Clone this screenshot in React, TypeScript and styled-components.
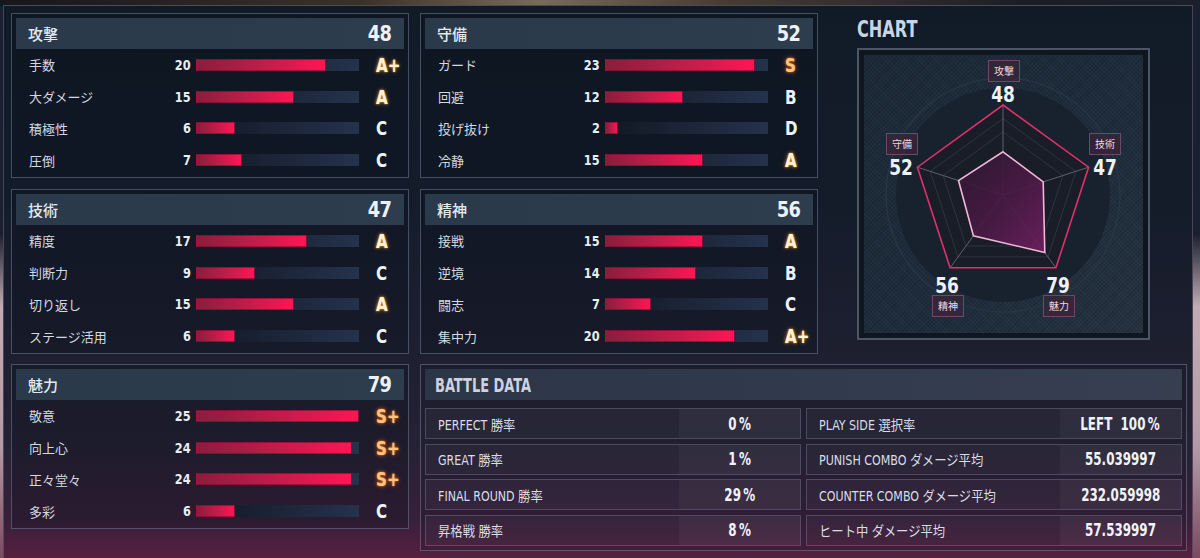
import React from 'react';
import styled, { createGlobalStyle, css } from 'styled-components';

const NUM_FONT = `"Liberation Sans Narrow", "DejaVu Sans Condensed", Roboto, "Noto Sans CJK JP", sans-serif`;
const JP_FONT = `"Noto Sans CJK JP", "Noto Sans", sans-serif`;
const LABEL_FONT = `"Liberation Sans Narrow", "DejaVu Sans Condensed", "Noto Sans CJK JP", sans-serif`;

const GlobalStyle = createGlobalStyle`
  html, body {
    margin: 0;
    height: 100%;
  }
  body {
    background:
      linear-gradient(90deg, #16161c 0%, #3c3129 30%, #7a6a58 45%, #4a3c34 60%, #1c1e26 85%, #1a1f2a 100%) top / 100% 6px no-repeat,
      linear-gradient(180deg, #1b2030 0%, #1b2030 42%, #c2acb4 55%, #b49aa6 80%, #7a4a60 100%);
    font-family: ${JP_FONT};
    overflow: hidden;
  }
  #root {
    height: 100%;
  }
`;

const Screen = styled.div`
  box-sizing: border-box;
  margin: 5px 7px 0 3px;
  height: calc(100% - 5px);
  border-top: 1px solid #7c3550;
  border-left: 1px solid rgba(120, 110, 130, 0.5);
  border-right: 1px solid rgba(120, 110, 130, 0.5);
  padding: 7px 5px 0 7px;
  background: linear-gradient(
    180deg,
    #111a27 0%,
    #141c2a 35%,
    #1d1f2f 62%,
    #252234 80%,
    #37203a 93%,
    #571f40 100%
  );
`;

const Layout = styled.div`
  display: grid;
  grid-template-columns: 398px 398px 1fr;
  grid-template-rows: 165px 164px auto;
  column-gap: 11px;
  row-gap: 11px;
  align-items: start;
`;

// condensed look: the installed narrow face is still wider than the game font
const Narrow = styled.span<{ $sx?: number; $origin?: string }>`
  display: inline-block;
  transform: scaleX(${(p) => p.$sx ?? 0.8});
  transform-origin: ${(p) => p.$origin ?? 'left'} center;
`;

const Panel = styled.section`
  box-sizing: border-box;
  height: 165px;
  border: 1px solid rgba(110, 128, 150, 0.55);
  background: rgba(6, 10, 18, 0.22);
  padding: 4px 4px 1px 4px;
  display: flex;
  flex-direction: column;
`;

const PanelHeader = styled.header`
  height: 31px;
  flex: none;
  display: flex;
  align-items: center;
  justify-content: space-between;
  padding: 0 12px;
  background: linear-gradient(90deg, #2b3a4a 0%, #2e3d4e 100%);
`;

const HeaderTitle = styled.span`
  font-family: ${JP_FONT};
  font-size: 15px;
  font-weight: 500;
  color: #e4e9ef;
`;

const HeaderValue = styled.span`
  font-family: ${NUM_FONT};
  font-size: 22px;
  font-weight: 700;
  color: #eef2f6;
  letter-spacing: -0.5px;
`;

const StatRow = styled.div`
  flex: 1;
  display: grid;
  grid-template-columns: 127px 30px 163px 29px;
  column-gap: 5px;
  align-items: center;
  padding-left: 13px;
  & > :last-child {
    margin-left: 12px;
  }
`;

const StatLabel = styled.span`
  font-family: ${JP_FONT};
  font-size: 13px;
  color: #d3d9e1;
`;

const StatNum = styled.span`
  font-family: ${NUM_FONT};
  font-size: 14px;
  font-weight: 700;
  color: #e8edf2;
  text-align: right;
`;

const Track = styled.div`
  height: 12px;
  background: linear-gradient(90deg, #121823 0%, #1b2435 45%, #24324c 100%);
`;

const Fill = styled.div`
  height: 100%;
  box-sizing: border-box;
  border: 1px solid rgba(120, 10, 40, 0.6);
  background: linear-gradient(90deg, #8b1d3d 0%, #c51c4b 55%, #ff1554 100%);
`;

const Grade = styled.span<{ $tier: string }>`
  font-family: ${NUM_FONT};
  font-size: 20px;
  font-weight: 700;
  color: #eef2f6;
  white-space: nowrap;
  display: inline-block;
  transform: scaleX(0.84);
  transform-origin: left center;
  ${(p) =>
    p.$tier === 'A' &&
    css`
      color: #fff3d6;
      text-shadow: 0 0 2px #ffb040, 0 0 5px rgba(255, 140, 30, 0.75);
    `}
  ${(p) =>
    p.$tier === 'S' &&
    css`
      color: #fbc57c;
      text-shadow: 0 0 2px #ff8a2a, 0 0 6px rgba(255, 90, 20, 0.8);
    `}
`;

const ChartArea = styled.div`
  grid-column: 3;
  grid-row: 1 / span 2;
  padding-left: 28px;
  padding-top: 6px;
`;

const ChartTitle = styled.h2`
  margin: 0 0 8px;
  height: 21px;
  line-height: 21px;
  font-family: ${NUM_FONT};
  font-size: 23px;
  font-weight: 700;
  color: #c9d5e2;
`;

const ChartFrame = styled.div`
  box-sizing: border-box;
  width: 293px;
  height: 292px;
  border: 2px solid #4c5667;
  padding: 5px;
  background: #0f161f;
`;

const ChartCanvas = styled.div`
  width: 279px;
  height: 278px;
  background:
    repeating-linear-gradient(45deg, rgba(255, 255, 255, 0.025) 0 1px, transparent 1px 3px),
    repeating-linear-gradient(-45deg, rgba(0, 0, 0, 0.12) 0 1px, transparent 1px 3px),
    linear-gradient(135deg, #1c2937 0%, #1f2c3b 60%, #25323f 100%);
`;

const BattlePanel = styled.section`
  grid-column: 2 / span 2;
  grid-row: 3;
  box-sizing: border-box;
  border: 1px solid rgba(130, 135, 160, 0.5);
  background: rgba(20, 20, 36, 0.2);
  padding: 4px;
`;

const BattleHeader = styled.header`
  height: 31px;
  display: flex;
  align-items: center;
  padding: 0 10px;
  margin-bottom: 8px;
  background: linear-gradient(90deg, #2b3647 0%, #333b4e 60%, #363e50 100%);
  font-family: ${NUM_FONT};
  font-size: 19px;
  font-weight: 700;
  color: #ccd3de;
`;

const BattleGrid = styled.div`
  display: grid;
  grid-template-columns: 1fr 1fr;
  column-gap: 5px;
  row-gap: 4.5px;
`;

const DataRow = styled.div`
  box-sizing: border-box;
  height: 31px;
  display: grid;
  grid-template-columns: 1fr 121px;
  border: 1px solid rgba(150, 155, 180, 0.32);
  background: rgba(255, 255, 255, 0.035);
`;

const DataLabel = styled.span`
  display: flex;
  align-items: center;
  padding-left: 12px;
  font-family: ${LABEL_FONT};
  font-size: 14px;
  color: #d9dde6;
  white-space: nowrap;
`;

const DataValue = styled.span`
  display: flex;
  align-items: center;
  justify-content: center;
  background: rgba(255, 255, 255, 0.04);
  font-family: ${NUM_FONT};
  font-size: 17px;
  font-weight: 700;
  color: #f0f3f7;
  white-space: pre;
`;

type Stat = [string, number, string];
type StatPanelData = { title: string; total: number; rows: Stat[]; col: number; row: number };

const panels: StatPanelData[] = [
  { title: '攻撃', total: 48, col: 1, row: 1, rows: [['手数', 20, 'A+'], ['大ダメージ', 15, 'A'], ['積極性', 6, 'C'], ['圧倒', 7, 'C']] },
  { title: '守備', total: 52, col: 2, row: 1, rows: [['ガード', 23, 'S'], ['回避', 12, 'B'], ['投げ抜け', 2, 'D'], ['冷静', 15, 'A']] },
  { title: '技術', total: 47, col: 1, row: 2, rows: [['精度', 17, 'A'], ['判断力', 9, 'C'], ['切り返し', 15, 'A'], ['ステージ活用', 6, 'C']] },
  { title: '精神', total: 56, col: 2, row: 2, rows: [['接戦', 15, 'A'], ['逆境', 14, 'B'], ['闘志', 7, 'C'], ['集中力', 20, 'A+']] },
  { title: '魅力', total: 79, col: 1, row: 3, rows: [['敬意', 25, 'S+'], ['向上心', 24, 'S+'], ['正々堂々', 24, 'S+'], ['多彩', 6, 'C']] },
];

const battleRows: [string, string][] = [
  ['PERFECT 勝率', '0\u2009%'],
  ['PLAY SIDE 選択率', 'LEFT  100\u2009%'],
  ['GREAT 勝率', '1\u2009%'],
  ['PUNISH COMBO ダメージ平均', '55.039997'],
  ['FINAL ROUND 勝率', '29\u2009%'],
  ['COUNTER COMBO ダメージ平均', '232.059998'],
  ['昇格戦 勝率', '8\u2009%'],
  ['ヒート中 ダメージ平均', '57.539997'],
];

const MAX_STAT = 25;

const StatPanel: React.FC<{ data: StatPanelData }> = ({ data }) => (
  <Panel style={{ gridColumn: data.col, gridRow: data.row }}>
    <PanelHeader>
      <HeaderTitle>{data.title}</HeaderTitle>
      <HeaderValue>
        <Narrow $sx={0.9} $origin="right">{data.total}</Narrow>
      </HeaderValue>
    </PanelHeader>
    {data.rows.map(([label, value, grade]) => (
      <StatRow key={label}>
        <StatLabel>{label}</StatLabel>
        <StatNum>
          <Narrow $sx={0.9} $origin="right">{value}</Narrow>
        </StatNum>
        <Track>
          <Fill style={{ width: `${(value / MAX_STAT) * 100}%` }} />
        </Track>
        <Grade $tier={grade[0]}>{grade}</Grade>
      </StatRow>
    ))}
  </Panel>
);

// radar: order clockwise from top
const radar = [
  { name: '攻撃', value: 48, box: [124, 5], num: [139, 47] },
  { name: '技術', value: 47, box: [225, 78], num: [241, 120] },
  { name: '魅力', value: 79, box: [179, 240], num: [194, 238] },
  { name: '精神', value: 56, box: [68, 240], num: [83, 238] },
  { name: '守備', value: 52, box: [22, 78], num: [37, 120] },
];

const CX = 139;
const CY = 140;
const R = 90;

const xy = (i: number, f: number) => {
  const a = ((-90 + 72 * i) * Math.PI) / 180;
  return [CX + R * f * Math.cos(a), CY + R * f * Math.sin(a)];
};
const pt = (i: number, f: number) => xy(i, f).map((n) => n.toFixed(1)).join(',');
const ring = (f: number) => radar.map((_, i) => pt(i, f)).join(' ');

const RadarChart: React.FC = () => (
  <svg width="279" height="278" viewBox="0 0 279 278">
    <defs>
      <linearGradient id="dataFill" x1="0" y1="0" x2="1" y2="1">
        <stop offset="0" stopColor="#2e1732" />
        <stop offset="0.55" stopColor="#4a1a45" />
        <stop offset="1" stopColor="#6e1f5e" />
      </linearGradient>
    </defs>
    <circle cx={CX} cy={CY} r={117} fill="none" stroke="#2b3745" strokeWidth="1.2" />
    <circle cx={CX} cy={CY} r={107} fill="#18222e" />
    <polygon points={ring(1)} fill="#181d28" />
    <polygon points={ring(0.85)} fill="none" stroke="rgba(120,130,150,0.22)" />
    <polygon points={ring(0.7)} fill="none" stroke="rgba(120,130,150,0.22)" />
    {radar.map((_, i) => {
      const [x2, y2] = xy(i, 1);
      return <line key={i} x1={CX} y1={CY} x2={x2} y2={y2} stroke="#5a6272" strokeWidth="1" />;
    })}
    <polygon points={ring(1)} fill="none" stroke="#e0306a" strokeWidth="1.6" />
    <polygon
      points={radar.map((d, i) => pt(i, d.value / 100)).join(' ')}
      fill="url(#dataFill)"
      fillOpacity="0.92"
      stroke="#efb6d6"
      strokeWidth="1.6"
    />
    {radar.map((d) => (
      <g key={d.name}>
        <rect
          x={d.box[0] + 0.5}
          y={d.box[1] + 0.5}
          width="31"
          height="21"
          fill="rgba(58,38,58,0.75)"
          stroke="#6d4868"
        />
        <text
          x={d.box[0] + 16}
          y={d.box[1] + 15}
          textAnchor="middle"
          fontFamily={JP_FONT}
          fontSize="10"
          fill="#f3d6df"
        >
          {d.name}
        </text>
        <text
          x={d.num[0]}
          y={d.num[1]}
          textAnchor="middle"
          fontFamily={NUM_FONT}
          fontWeight="700"
          fontSize="21"
          fill="#eef2f7"
          transform={`translate(${d.num[0]} 0) scale(0.9 1) translate(${-d.num[0]} 0)`}
        >
          {d.value}
        </text>
      </g>
    ))}
  </svg>
);

export default function App() {
  return (
    <>
      <GlobalStyle />
      <Screen>
        <Layout>
          {panels.map((p) => (
            <StatPanel key={p.title} data={p} />
          ))}
          <ChartArea>
            <ChartTitle>
              <Narrow $sx={0.78}>CHART</Narrow>
            </ChartTitle>
            <ChartFrame>
              <ChartCanvas>
                <RadarChart />
              </ChartCanvas>
            </ChartFrame>
          </ChartArea>
          <BattlePanel>
            <BattleHeader>
              <Narrow $sx={0.76}>BATTLE DATA</Narrow>
            </BattleHeader>
            <BattleGrid>
              {battleRows.map(([label, value]) => (
                <DataRow key={label}>
                  <DataLabel>
                    <Narrow $sx={0.88}>{label}</Narrow>
                  </DataLabel>
                  <DataValue>
                    <Narrow $sx={0.78} $origin="center">{value}</Narrow>
                  </DataValue>
                </DataRow>
              ))}
            </BattleGrid>
          </BattlePanel>
        </Layout>
      </Screen>
    </>
  );
}
